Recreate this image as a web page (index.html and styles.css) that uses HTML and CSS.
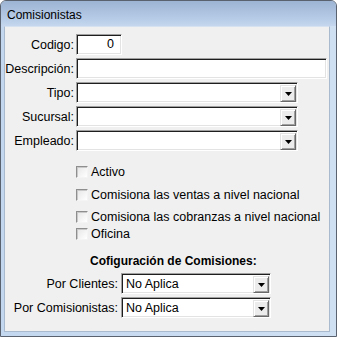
FILE: index.html
```html
<!DOCTYPE html>
<html lang="es">
<head>
<meta charset="utf-8">
<title>Comisionistas</title>
<link rel="stylesheet" href="styles.css">
</head>
<body>
<div class="window">
  <div class="titlebar"><span class="title">Comisionistas</span></div>
  <div class="frame">
    <div class="client">
      <div class="form">
        <label class="lbl">Codigo:</label>
        <div class="field codigo">0</div>
        <label class="lbl">Descripción:</label>
        <div class="field desc"></div>
        <label class="lbl">Tipo:</label>
        <div class="field combo"><span class="val"></span><span class="btn"><svg width="7" height="4" viewBox="0 0 7 4"><polygon points="0,0 7,0 3.5,4" fill="#000"/></svg></span></div>
        <label class="lbl">Sucursal:</label>
        <div class="field combo"><span class="val"></span><span class="btn"><svg width="7" height="4" viewBox="0 0 7 4"><polygon points="0,0 7,0 3.5,4" fill="#000"/></svg></span></div>
        <label class="lbl">Empleado:</label>
        <div class="field combo"><span class="val"></span><span class="btn"><svg width="7" height="4" viewBox="0 0 7 4"><polygon points="0,0 7,0 3.5,4" fill="#000"/></svg></span></div>
      </div>

      <div class="checks">
        <div class="chk r1"><span class="box"></span><span>Activo</span></div>
        <div class="chk r2"><span class="box"></span><span>Comisiona las ventas a nivel nacional</span></div>
        <div class="chk r3"><span class="box"></span><span>Comisiona las cobranzas a nivel nacional</span></div>
        <div class="chk r4"><span class="box"></span><span>Oficina</span></div>
      </div>

      <div class="heading">Cofiguración de Comisiones:</div>

      <div class="form2">
        <label class="lbl">Por Clientes:</label>
        <div class="field combo small"><span class="val">No Aplica</span><span class="btn"><svg width="7" height="4" viewBox="0 0 7 4"><polygon points="0,0 7,0 3.5,4" fill="#000"/></svg></span></div>
        <label class="lbl">Por Comisionistas:</label>
        <div class="field combo small"><span class="val">No Aplica</span><span class="btn"><svg width="7" height="4" viewBox="0 0 7 4"><polygon points="0,0 7,0 3.5,4" fill="#000"/></svg></span></div>
      </div>
    </div>
  </div>
</div>
</body>
</html>
```

FILE: styles.css
```css
* { box-sizing: border-box; }
html, body { margin: 0; padding: 0; }
body {
  width: 337px;
  height: 337px;
  background: #ffffff;
  font-family: "Liberation Sans", Arial, sans-serif;
  font-size: 12.5px;
  color: #000;
  overflow: hidden;
}
.window {
  width: 337px;
  height: 337px;
  border: 1px solid #5a6270;
  border-radius: 6px 6px 0 0;
  background: #c6daef;
  display: flex;
  flex-direction: column;
  overflow: hidden;
}
.titlebar {
  height: 25px;
  flex: none;
  background: linear-gradient(#9db4d3, #b6cbe6 70%, #c4d7ee);
  padding: 3px 6px 0 6px;
  display: flex;
  align-items: center;
}
.title { font-size: 12px; color: #000; }
.frame {
  flex: 1;
  padding: 0 6px 4px 3px;
  background: linear-gradient(90deg, #c3d7ee, #cfe0f3);
}
.client {
  height: 100%;
  background: #f0f0f0;
  border: 1px solid #a9bacf;
  border-top-color: #d6e2f0;
  padding-top: 7px;
}
.form {
  display: grid;
  grid-template-columns: 69px 1fr;
  column-gap: 2px;
  row-gap: 3px;
  align-items: center;
}
.lbl { text-align: right; white-space: nowrap; }
.field {
  height: 21px;
  background: #fff;
  border: 1px solid;
  border-color: #a0a0a0 #ffffff #ffffff #a0a0a0;
  box-shadow: inset 1px 1px 0 #1e1e1e, inset -1px -1px 0 #e3e3e3;
}
.codigo {
  width: 46px;
  text-align: right;
  padding-right: 7px;
  line-height: 19px;
}
.desc { width: 251px; }
.combo {
  width: 222px;
  display: flex;
  padding: 2px 1px 1px 2px;
}
.combo .val { flex: 1; padding-left: 2px; line-height: 17px; white-space: nowrap; }
.btn {
  width: 16px;
  height: 17px;
  background: #ececec;
  border: 1px solid;
  border-color: #e3e3e3 #696969 #696969 #e3e3e3;
  box-shadow: inset 1px 1px 0 #ffffff, inset -1px -1px 0 #a0a0a0;
  display: flex;
  align-items: center;
  justify-content: center;
  padding-top: 1px;
}
.combo.small { width: 150px; }
.checks {
  display: flex;
  flex-direction: column;
  padding-left: 71px;
}
.chk {
  height: 14px;
  display: flex;
  align-items: center;
  gap: 3px;
  white-space: nowrap;
}
.r1 { margin-top: 14px; }
.r2 { margin-top: 9px; }
.r3 { margin-top: 8px; }
.r4 { margin-top: 3px; }
.box {
  width: 12px;
  height: 12px;
  flex: none;
  background: linear-gradient(135deg, #e6e6e6, #ffffff);
  border: 1px solid;
  border-color: #8e8e8e #f4f4f4 #f4f4f4 #8e8e8e;
  box-shadow: inset 1px 1px 0 #c9c9c9;
}
.heading {
  margin-top: 13px;
  height: 14px;
  line-height: 14px;
  padding-left: 85px;
  font-size: 12px;
  font-weight: bold;
}
.form2 {
  margin-top: 5px;
  display: grid;
  grid-template-columns: 113px 150px;
  column-gap: 3px;
  row-gap: 3px;
  align-items: center;
}
```
